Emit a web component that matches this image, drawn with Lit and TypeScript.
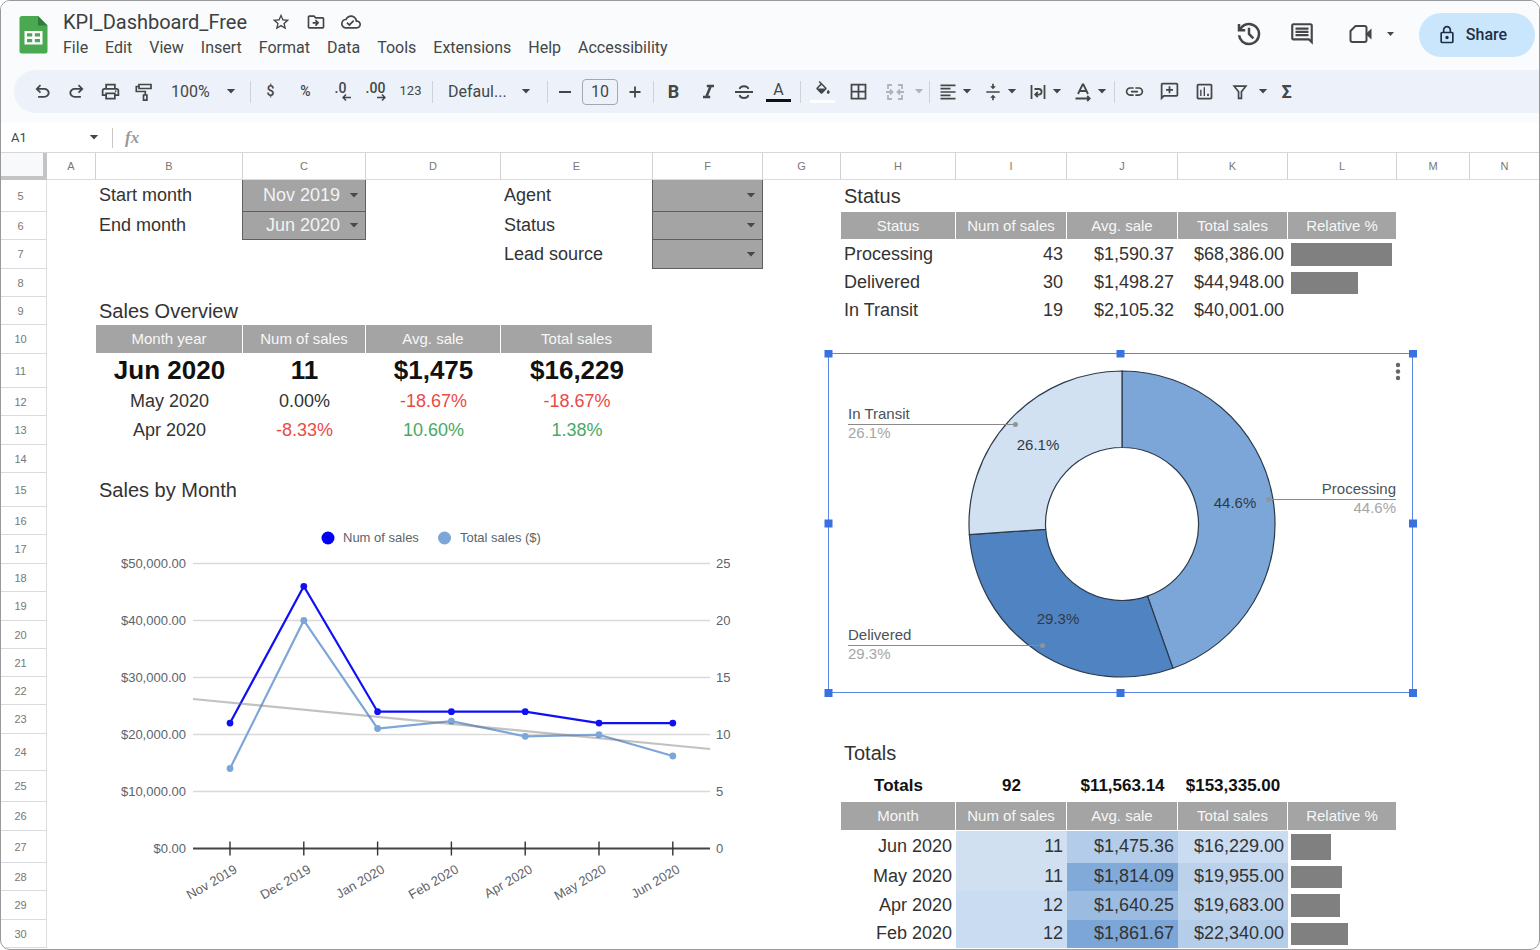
import { LitElement, html, svg, css, nothing, TemplateResult } from "lit";
import { customElement } from "lit/decorators.js";
import { classMap } from "lit/directives/class-map.js";

/* ---------- icons ---------- */

const glyph = (d: string, size = 20) => html`
  <svg width=${size} height=${size} viewBox="0 0 24 24" fill="currentColor" aria-hidden="true"><path d=${d}></path></svg>`;

const symbol = (d: string, size = 20) => html`
  <svg width=${size} height=${size} viewBox="0 -960 960 960" fill="currentColor" aria-hidden="true"><path d=${d}></path></svg>`;

const line = (d: string, width = 20, stroke = 2) => html`
  <svg width=${width} height=${width} viewBox="0 0 20 20" fill="none" stroke="currentColor" stroke-width=${stroke} aria-hidden="true"><path d=${d}></path></svg>`;

const caret = () => html`
  <svg class="caret" width="10" height="5" viewBox="0 0 10 5" fill="currentColor" aria-hidden="true"><path d="M0.800 0h8.400L5 4.600z"></path></svg>`;

const ICON = {
  undo: "M280-200v-80h284q63 0 109.500-40T720-420q0-60-46.500-100T564-560H312l104 104-56 56-200-200 200-200 56 56-104 104h252q97 0 169.500 63T806-420q0 94-72.500 157T564-200H280Z",
  redo: "M396-200q-97 0-169.500-63T154-420q0-94 72.500-157T396-640h252L544-744l56-56 200 200-200 200-56-56 104-104H396q-63 0-109.500 40T240-420q0 60 46.500 100T396-280h284v80H396Z",
  print: "M640-640v-120H320v120h-80v-200h480v200h-80Zm80 180q17 0 28.500-11.500T760-500q0-17-11.500-28.500T720-540q-17 0-28.500 11.500T680-500q0 17 11.500 28.500T720-460Zm-80 260v-160H320v160h320Zm80 80H240v-160H80v-240q0-51 35-85.500t85-34.500h560q51 0 85.500 34.500T880-520v240H720v160Zm80-240v-160q0-17-11.500-28.500T760-560H200q-17 0-28.500 11.500T160-520v160h80v-80h480v80h80Z",
  history: "M480-120q-138 0-240.500-91.500T122-440h82q14 104 92.500 172T480-200q117 0 198.500-81.500T760-480q0-117-81.500-198.500T480-760q-69 0-129 32t-101 88h110v80H120v-240h80v94q51-64 124.500-99T480-840q75 0 140.500 28.500t114 77q48.500 48.500 77 114T840-480q0 75-28.500 140.500t-77 114q-48.500 48.500-114 77T480-120Zm112-192L440-464v-216h80v184l128 128-56 56Z",
  lock: "M240-80q-33 0-56.500-23.500T160-160v-400q0-33 23.500-56.500T240-640h40v-80q0-83 58.500-141.500T480-920q83 0 141.500 58.500T680-720v80h40q33 0 56.500 23.500T800-560v400q0 33-23.500 56.500T720-80H240Zm0-80h480v-400H240v400Zm240-120q33 0 56.500-23.500T560-360q0-33-23.500-56.500T480-440q-33 0-56.500 23.500T400-360q0 33 23.500 56.500T480-280ZM360-640h240v-80q0-50-35-85t-85-35q-50 0-85 35t-35 85v80Z",
  star: "M22 9.240l-7.190-.62L12 2 9.190 8.630 2 9.240l5.460 4.730L5.820 21 12 17.270 18.180 21l-1.630-7.030L22 9.240zM12 15.400l-3.760 2.270 1-4.280-3.320-2.880 4.380-.38L12 6.100l1.710 4.040 4.380.38-3.320 2.880 1 4.280L12 15.400z",
  move: "M20 6h-8l-2-2H4c-1.100 0-2 .9-2 2v12c0 1.100.9 2 2 2h16c1.100 0 2-.9 2-2V8c0-1.100-.9-2-2-2zm0 12H4V6h5.170l2 2H20v10zm-7.840-6H8v2h4.160l-1.590 1.590L11.990 17 16 13.010 11.990 9l-1.410 1.410L12.160 12z",
  cloud: "M19.350 10.040C18.670 6.590 15.640 4 12 4 9.110 4 6.600 5.640 5.350 8.040 2.340 8.360 0 10.910 0 14c0 3.310 2.690 6 6 6h13c2.760 0 5-2.240 5-5 0-2.640-2.050-4.780-4.650-4.960zM19 18H6c-2.210 0-4-1.790-4-4 0-2.050 1.530-3.760 3.560-3.970l1.070-.11.5-.95C8.080 7.140 9.940 6 12 6c2.620 0 4.880 1.860 5.390 4.430l.3 1.500 1.530.11c1.560.1 2.780 1.410 2.780 2.960 0 1.650-1.350 3-3 3zm-9-3.820l-2.090-2.090L6.500 13.500 10 17l6.010-6.010-1.410-1.410z",
  comments: "M21.990 4c0-1.100-.89-2-1.990-2H4c-1.100 0-2 .9-2 2v12c0 1.100.9 2 2 2h14l4 4-.01-18zM20 4v13.170L18.830 16H4V4h16zM6 12h12v2H6zm0-3h12v2H6zm0-3h12v2H6z",
  fill: "M16.560 8.940L7.620 0 6.210 1.410l2.380 2.380-5.150 5.150c-.59.59-.59 1.540 0 2.120l5.500 5.500c.29.29.68.44 1.060.44s.77-.15 1.060-.44l5.500-5.500c.59-.58.59-1.530 0-2.120zM5.210 10L10 5.210 14.790 10H5.210zM19 11.500s-2 2.170-2 3.500c0 1.100.9 2 2 2s2-.9 2-2c0-1.330-2-3.500-2-3.500z",
  borders: "M3 3v18h18V3H3zm8 16H5v-6h6v6zm0-8H5V5h6v6zm8 8h-6v-6h6v6zm0-8h-6V5h6v6z",
  alignLeft: "M15 15H3v2h12v-2zm0-8H3v2h12V7zM3 13h18v-2H3v2zm0 8h18v-2H3v2zM3 3v2h18V3H3z",
  valign: "M9 19h2v3h2v-3h2.500L12 15.200 8.500 19zM15.500 5H13V2h-2v3H8.500L12 8.800 15.500 5zM4 11v2h16v-2H4z",
  link: "M3.900 12c0-1.710 1.390-3.100 3.100-3.100h4V7H7c-2.760 0-5 2.240-5 5s2.240 5 5 5h4v-1.900H7c-1.710 0-3.100-1.390-3.100-3.100zM8 13h8v-2H8v2zm9-6h-4v1.900h4c1.710 0 3.100 1.390 3.100 3.100s-1.390 3.100-3.100 3.100h-4V17h4c2.760 0 5-2.240 5-5s-2.240-5-5-5z",
  addComment: "M20 2H4c-1.100 0-2 .9-2 2v18l4-4h14c1.100 0 2-.9 2-2V4c0-1.100-.9-2-2-2zm0 14H5.170L4 17.170V4h16v12zM11 14h2v-3h3V9h-3V6h-2v3H8v2h3z",
  chart: "M19 3H5c-1.100 0-2 .9-2 2v14c0 1.100.9 2 2 2h14c1.100 0 2-.9 2-2V5c0-1.100-.9-2-2-2zm0 16H5V5h14v14zM7 10h1.600v7H7zm4-3h1.600v10H11zm4 7.500h2V17h-2z",
};

const roller = line("M5 2.500h12v4H5zM5 4.500H2.300v5h9V13M9.500 13h3.400v5.200H9.500z", 20, 1.7);
const strike = line("M1 10h18M14.300 7C14 5 12 4.200 10 4.200S6 5 5.700 7M5.700 13c.3 2 2.300 3 4.300 3s4-1 4.300-3", 20, 1.9);
const italic = line("M8 3.500h8.500M3.500 16.500H12M12.600 3.500 7.400 16.500", 17, 3);
const merge = line("M7 3H3v4M3 13v4h4M13 3h4v4M17 13v4h-4M1 10h6M13 10h6M5 7.500 7.500 10 5 12.500M15 7.500 12.500 10l2.500 2.500", 20, 1.8);
const wrap = line("M3.500 3v14M16.500 3v14M6.500 7h4.300a2.800 2.800 0 0 1 0 5.600H7.500M9.800 10 7.200 12.600l2.600 2.600", 20, 1.8);
const rotate = line("M5 12 9.600 2.500h.8L15 12M6.500 9h7M2.500 16.500h14M14.200 14l2.500 2.500-2.500 2.500", 20, 1.8);
const funnel = line("M3.500 3.500h13L11.600 9.800v7.200H8.400V9.800z", 18, 1.9);
const meet = html`<svg width="24" height="20" viewBox="0 0 24 20" fill="none" stroke="currentColor" stroke-width="2" aria-hidden="true">
  <path d="M6.500 2h9a2 2 0 0 1 2 2v12a2 2 0 0 1-2 2h-12a2 2 0 0 1-2-2V7z"></path><path d="M16.500 10l6-5.500v11z" fill="currentColor" stroke="none"></path></svg>`;

/* ---------- sheet data ---------- */

type Kind = "text" | "title" | "head" | "big" | "mid" | "num" | "strong" | "bar" | "pick";
interface Cell { v: string; k: Kind; tone?: string; label?: string; ratio?: number; fill?: string; }
interface Row { n: number; h: number; cells?: Record<string, Cell>; }

const COLS: [string, number][] = [
  ["A", 49], ["B", 147], ["C", 123], ["D", 135], ["E", 152], ["F", 110], ["G", 78],
  ["H", 115], ["I", 111], ["J", 111], ["K", 110], ["L", 109], ["M", 73], ["N", 0],
];

const c = (v: string, k: Kind, more: Partial<Cell> = {}): Cell => ({ v, k, ...more });
const heads = (start: string, names: string[]) =>
  Object.fromEntries(names.map((n, i) => [String.fromCharCode(start.charCodeAt(0) + i), c(n, "head")]));
const status = (name: string, n: string, avg: string, total: string, ratio: number) => ({
  H: c(name, "text"), I: c(n, "num"), J: c(avg, "num"), K: c(total, "num"), L: c("", "bar", { ratio }),
});
const month = (name: string, n: string, avg: string, total: string, ratio: number, fills: string[]) => ({
  H: c(name, "num"), I: c(n, "num", { fill: fills[0] }), J: c(avg, "num", { fill: fills[1] }),
  K: c(total, "num", { fill: fills[2] }), L: c("", "bar", { ratio }),
});

const ROWS: Row[] = [
  { n: 5, h: 32, cells: { B: c("Start month", "text"), C: c("Nov 2019", "pick", { label: "Start month" }), E: c("Agent", "text"), F: c("", "pick", { label: "Agent" }), H: c("Status", "title") } },
  { n: 6, h: 28, cells: { B: c("End month", "text"), C: c("Jun 2020", "pick", { label: "End month" }), E: c("Status", "text"), F: c("", "pick", { label: "Status" }), ...heads("H", ["Status", "Num of sales", "Avg. sale", "Total sales", "Relative %"]) } },
  { n: 7, h: 29, cells: { E: c("Lead source", "text"), F: c("", "pick", { label: "Lead source" }), ...status("Processing", "43", "$1,590.37", "$68,386.00", 100) } },
  { n: 8, h: 28, cells: status("Delivered", "30", "$1,498.27", "$44,948.00", 66) },
  { n: 9, h: 28, cells: { B: c("Sales Overview", "title"), ...status("In Transit", "19", "$2,105.32", "$40,001.00", 0) } },
  { n: 10, h: 29, cells: heads("B", ["Month year", "Num of sales", "Avg. sale", "Total sales"]) },
  { n: 11, h: 34, cells: { B: c("Jun 2020", "big"), C: c("11", "big"), D: c("$1,475", "big"), E: c("$16,229", "big") } },
  { n: 12, h: 28, cells: { B: c("May 2020", "mid"), C: c("0.00%", "mid"), D: c("-18.67%", "mid", { tone: "down" }), E: c("-18.67%", "mid", { tone: "down" }) } },
  { n: 13, h: 29, cells: { B: c("Apr 2020", "mid"), C: c("-8.33%", "mid", { tone: "down" }), D: c("10.60%", "mid", { tone: "up" }), E: c("1.38%", "mid", { tone: "up" }) } },
  { n: 14, h: 28 },
  { n: 15, h: 34, cells: { B: c("Sales by Month", "title") } },
  { n: 16, h: 28 }, { n: 17, h: 29 }, { n: 18, h: 28 }, { n: 19, h: 29 }, { n: 20, h: 28 },
  { n: 21, h: 28 }, { n: 22, h: 28 }, { n: 23, h: 29 },
  { n: 24, h: 37, cells: { H: c("Totals", "title") } },
  { n: 25, h: 31, cells: { H: c("Totals", "strong"), I: c("92", "strong"), J: c("$11,563.14", "strong"), K: c("$153,335.00", "strong") } },
  { n: 26, h: 29, cells: heads("H", ["Month", "Num of sales", "Avg. sale", "Total sales", "Relative %"]) },
  { n: 27, h: 32, cells: month("Jun 2020", "11", "$1,475.36", "$16,229.00", 40, ["#d0e0f1", "#b2cce9", "#c9dcf1"]) },
  { n: 28, h: 28, cells: month("May 2020", "11", "$1,814.09", "$19,955.00", 50, ["#d0e0f1", "#82aad9", "#bcd2eb"]) },
  { n: 29, h: 29, cells: month("Apr 2020", "12", "$1,640.25", "$19,683.00", 49, ["#c9dcf1", "#9bbbe1", "#bdd3eb"]) },
  { n: 30, h: 28, cells: month("Feb 2020", "12", "$1,861.67", "$22,340.00", 56, ["#c9dcf1", "#7ca6d7", "#b4cee9"]) },
];

/* ---------- line chart ---------- */

@customElement("sales-line-chart")
class SalesLineChart extends LitElement {
  static styles = css`
    :host { display: block; }
    svg { display: block; font: 13px "Liberation Sans", Arial, sans-serif; fill: #5b646b; }
  `;
  private months = ["Nov 2019", "Dec 2019", "Jan 2020", "Feb 2020", "Apr 2020", "May 2020", "Jun 2020"];
  private counts = [11, 23, 12, 12, 12, 11, 11];
  private totals = [14035, 40001, 21050, 22340, 19683, 19955, 16229];

  render() {
    const x = (i: number) => 134 + i * 73.8;
    const y = (v: number) => 333.5 - v * 11.4;
    const series = (vals: number[], color: string) => svg`
      <polyline points=${vals.map((v, i) => `${x(i)},${y(v)}`).join(" ")} fill="none" stroke=${color} stroke-width="2.200"></polyline>
      ${vals.map((v, i) => svg`<circle cx=${x(i)} cy=${y(v)} r="3.400" fill=${color}></circle>`)}`;
    return html`
      <svg width="660" height="400" viewBox="0 0 660 400" role="img" aria-label="Sales by Month">
        <circle cx="232" cy="23" r="6.500" fill="#0000f5"></circle>
        <text x="247" y="27">Num of sales</text>
        <circle cx="348.500" cy="23" r="6.500" fill="#7ca6d8"></circle>
        <text x="364" y="27">Total sales ($)</text>
        ${[5, 10, 15, 20, 25].map((v) => svg`<path d="M97 ${y(v)}H614" stroke="#d9d9d9" stroke-width="1.500"></path>`)}
        ${[0, 5, 10, 15, 20, 25].map((v) => svg`
          <text x="90" y=${y(v) + 4.5} text-anchor="end">${v ? `$${v * 2},000.00` : "$0.00"}</text>
          <text x="620" y=${y(v) + 4.5}>${v}</text>`)}
        <path d="M97 333.500H614" stroke="#444" stroke-width="1.800"></path>
        ${this.months.map((m, i) => svg`
          <path d="M${x(i)} 326.500v14" stroke="#333" stroke-width="1.400"></path>
          <text transform="translate(${x(i) + 8} 357) rotate(-30)" text-anchor="end">${m}</text>`)}
        ${series(this.counts, "#1010f5")}
        ${series(this.totals.map((t) => t / 2000), "#7ca6d8")}
        <path d="M97 184L614 234" stroke="#777" stroke-opacity="0.450" stroke-width="2.200"></path>
      </svg>`;
  }
}

/* ---------- donut chart ---------- */

@customElement("status-donut-chart")
class StatusDonutChart extends LitElement {
  static styles = css`
    :host { display: block; }
    svg { display: block; font: 15px "Liberation Sans", Arial, sans-serif; fill: #4a5359; }
    .share { fill: #a6a6a6; }
    .inner { fill: #2f3a44; }
    .leader { stroke: #8a8a8a; fill: none; }
    .dot { fill: #8f9499; }
    .frame { fill: none; stroke: #5b86e5; }
    .handle { fill: #3871e0; }
    .menu { fill: #666; }
  `;
  private slices = [
    { share: 0.446, color: "#7ca6d8" },
    { share: 0.293, color: "#4f83c2" },
    { share: 0.261, color: "#d1e1f1" },
  ];

  private ring() {
    const cx = 298, cy = 174, R = 153, r = 76.5;
    let at = 0;
    const p = (t: number, rad: number) =>
      `${(cx + rad * Math.sin(t * 2 * Math.PI)).toFixed(2)} ${(cy - rad * Math.cos(t * 2 * Math.PI)).toFixed(2)}`;
    return this.slices.map((s) => {
      const a = at, b = (at += s.share);
      return svg`<path fill=${s.color} stroke="#2b3b4b" stroke-width="1.200"
        d="M${p(a, R)}A${R} ${R} 0 0 1 ${p(b, R)}L${p(b, r)}A${r} ${r} 0 0 0 ${p(a, r)}Z"></path>`;
    });
  }

  render() {
    const xs = [4.5, 296.5, 589], ys = [3.5, 173.5, 343];
    return html`
      <svg width="593" height="348" viewBox="0 0 593 348" role="img" aria-label="Total sales by status">
        <rect x="4.500" y="3.500" width="584" height="339" fill="#fff"></rect>
        ${this.ring()}
        <text class="inner" x="214" y="100" text-anchor="middle">26.1%</text>
        <text class="inner" x="411" y="158" text-anchor="middle">44.6%</text>
        <text class="inner" x="234" y="274" text-anchor="middle">29.3%</text>
        <path class="leader" d="M24 74.500H191M24 295.500H219M444 149.500H572"></path>
        <circle class="dot" cx="191.500" cy="74.500" r="2.500"></circle>
        <circle class="dot" cx="218.500" cy="295.500" r="2.500"></circle>
        <circle class="dot" cx="444.500" cy="149.500" r="2.500"></circle>
        <text x="24" y="69">In Transit</text><text class="share" x="24" y="88">26.1%</text>
        <text x="24" y="290">Delivered</text><text class="share" x="24" y="309">29.3%</text>
        <text x="572" y="144" text-anchor="end">Processing</text><text class="share" x="572" y="163" text-anchor="end">44.6%</text>
        <rect class="frame" x="4.500" y="3.500" width="584" height="339"></rect>
        ${ys.map((y) => xs.map((x) => (y === ys[1] && x === xs[1] ? nothing
          : svg`<rect class="handle" x=${x - 4} y=${y - 4} width="8" height="8"></rect>`)))}
        ${[15, 21.500, 28].map((y) => svg`<circle class="menu" cx="574" cy=${y} r="2.200"></circle>`)}
      </svg>`;
  }
}

/* ---------- application ---------- */

@customElement("app-root")
class AppRoot extends LitElement {
  static styles = css`
    :host { display: block; background: #fff; color: #444746; font-family: Roboto, "Open Sans", sans-serif; }
    * { box-sizing: border-box; }
    svg { display: block; flex: none; }
    button, input, select { font: inherit; color: inherit; background: none; border: 0; margin: 0; padding: 0; outline: none; }
    button { display: flex; align-items: center; justify-content: center; cursor: pointer; }
    select { appearance: none; cursor: pointer; }
    .window { display: flex; flex-direction: column; height: 100vh; overflow: hidden; border: 1px solid #999; border-radius: 10px; background: #fff; }
    .top { background: #f9fbfd; padding-bottom: 10px; }

    header { display: flex; align-items: flex-start; height: 69px; padding: 10px 4px 0 18px; }
    .logo { margin: 5px 15px 0 0; }
    .names { flex: 1; }
    .title-row { display: flex; align-items: center; gap: 15px; height: 22px; }
    h1 { margin: 0 9px 0 0; font-size: 20px; line-height: 20px; font-weight: 400; color: #3c4043; }
    .menus { display: flex; gap: 17px; margin-top: 3px; }
    .menus button { font-size: 16px; line-height: 24px; color: #444746; }
    .actions { display: flex; align-items: center; height: 46px; }
    .actions .tool { width: 53px; }
    .actions .call { width: 60px; gap: 14px; margin: 0 18px 0 13px; }
    .share { width: 116px; height: 44px; margin-top: 1px; padding-right: 10px; border-radius: 22px; background: #c9e6fd; color: #1f2f46; font-size: 16px; font-weight: 500; gap: 9px; }

    .toolbar { display: flex; height: 43px; margin-left: 13px; background: #edf2fa; border-radius: 22px 0 0 22px; font-size: 16px; }
    .group { display: flex; align-items: center; position: relative; padding: 0 5px 0 2px; }
    .group:not(:last-child)::after { content: ""; width: 1px; height: 22px; background: #cdd1d8; position: absolute; right: 0; }
    .group.first { padding: 0 10px 0 11px; }
    .group.flush { padding: 0 1px 0 0; }
    .group.size { padding: 0 2px 0 0; }
    .group.drops { padding: 0 5px 0 0; }
    .group.paint { padding: 0 5px 0 4px; gap: 1px; }
    .tool { width: 35px; height: 32px; }
    .first .tool, .size .tool { width: 34px; }
    .drop { width: 45px; height: 32px; gap: 4px; padding-left: 8px; justify-content: flex-start; }
    .narrow { width: 12px; height: 32px; }
    .faded { color: #b0b4b9; }
    .select { display: grid; align-items: center; }
    .select > * { grid-area: 1 / 1; }
    .select .caret { justify-self: end; margin-right: 5px; pointer-events: none; }
    .zoom select { width: 80px; padding-left: 10px; }
    .font select { width: 114px; padding-left: 15px; }
    .font .caret { margin-right: 16px; }
    .size input { width: 36px; height: 26px; border: 1px solid #a4a7ab; border-radius: 4px; text-align: center; }
    .small { font-size: 14px; font-weight: 500; padding-bottom: 2px; }
    .tiny { font-size: 13px; padding-bottom: 2px; }
    .strong { font-size: 18px; font-weight: 700; }
    .decimal { flex-direction: column; font-size: 14px; line-height: 12px; font-weight: 500; }
    .decimal svg { margin-left: 12px; }
    .swatch { flex-direction: column; line-height: 16px; gap: 1px; }
    .swatch i { width: 25px; height: 3px; background: #111; }
    .swatch i.white { background: #fff; }

    .formula { display: flex; align-items: center; height: 29px; font-size: 14px; }
    .name-box { display: flex; align-items: center; width: 112px; padding: 0 13px 0 10px; border-right: 1px solid #c7c7c7; height: 20px; }
    .name-box input { flex: 1; min-width: 0; font-size: 13px; }
    .fx { padding-left: 12px; font: italic 700 17px "Liberation Serif", serif; color: #9a9a9a; }
    .formula > input { flex: 1; }

    .sheet { position: relative; flex: 1; min-height: 0; overflow: hidden; font-family: "Liberation Sans", Arial, sans-serif; }
    table { table-layout: fixed; width: 100%; border-collapse: separate; border-spacing: 0; border-top: 1px solid #d5d7da; }
    th, td { padding: 0; white-space: nowrap; line-height: 20px; overflow: hidden; }
    .rownum { width: 46px; }
    thead th { height: 27px; font-size: 11px; font-weight: 400; color: #777; border-right: 1px solid #d0d2d5; border-bottom: 1px solid #d9dbde; }
    thead th:last-child { border-right: 0; }
    thead th.corner { background: #f8f9fb; border-right: 4px solid #c4c4c4; border-bottom: 4px solid #c4c4c4; }
    tbody th { font-size: 11px; font-weight: 400; color: #777; border-right: 1px solid #dcdee1; border-bottom: 1px solid #d9dbde; padding-right: 6px; }
    td { color: #333; font-size: 18px; padding: 0 3px 2px; }
    td.text, td.title { text-align: left; overflow: visible; }
    td.title { font-size: 20px; padding-bottom: 0; }
    td.head { padding: 0; background: #a4a4a4; background-clip: padding-box; border-right: 1px solid #fff; border-bottom: 1px solid #fff; color: #f7f7f7; font-size: 15px; text-align: center; }
    td.big { font-size: 26px; font-weight: 700; text-align: center; color: #111; }
    td.mid { text-align: center; }
    td.num { text-align: right; padding-right: 4px; }
    td.strong { font-size: 17px; text-align: center; color: #111; }
    td.down { color: #ea4a45; }
    td.up { color: #4aa862; }
    td.bars { padding: 0 5px 0 3px; }
    td.pick { padding: 0; background: #a4a4a4; border: 1px solid #5f5f5f; border-width: 0 1px 1px 0; box-shadow: -1px 0 #5f5f5f; overflow: visible; }
    td.pick select { width: 100%; height: 26px; padding: 0 25px 2px 0; color: #f3f3f3; text-align-last: right; }
    td.pick .caret { margin-right: 6px; color: #484848; }
    .bar { background: #808080; }
    .trend { position: absolute; left: 95px; top: 363px; }
    .donut { position: absolute; left: 823px; top: 198px; }
  `;

  private tool(name: string, body: unknown, cls = "") {
    return html`<button class="tool ${cls}" aria-label=${name}>${body}</button>`;
  }

  private drop(name: string, body: unknown) {
    return html`<button class="drop" aria-label=${name}>${body}${caret()}</button>`;
  }

  private cell(row: Row, col: string): TemplateResult {
    const cell = row.cells?.[col];
    if (!cell) return html`<td></td>`;
    const cls = classMap({ [cell.k]: true, [cell.tone ?? "plain"]: true });
    if (cell.k === "bar") {
      return html`<td class="bars"><div class="bar" style="width:${cell.ratio}%;height:${row.h - 6}px"></div></td>`;
    }
    if (cell.k === "pick") {
      return html`<td class=${cls}><div class="select">
        <select aria-label=${cell.label ?? ""}><option>${cell.v}</option></select>${caret()}</div></td>`;
    }
    return html`<td class=${cls} style=${cell.fill ? `background:${cell.fill}` : nothing}>${cell.v}</td>`;
  }

  render() {
    const menus = ["File", "Edit", "View", "Insert", "Format", "Data", "Tools", "Extensions", "Help", "Accessibility"];
    return html`
      <div class="window">
        <div class="top">
          <header>
            <svg class="logo" width="29" height="38" viewBox="0 0 29 38" aria-hidden="true">
              <path d="M3 0h16l9.500 9.500V35a2.500 2.500 0 0 1-2.500 2.500H3A2.500 2.500 0 0 1 .5 35V2.500A2.500 2.500 0 0 1 3 0z" fill="#4aa851"></path>
              <path d="M19 0l9.500 9.500H19z" fill="#2f7d38"></path>
              <path d="M5.500 15h18v13.500h-18zM8 17.300v3.200h5.200v-3.200zM15.800 17.300v3.200H21v-3.200zM8 23v3.200h5.200V23zM15.800 23v3.200H21V23z" fill="#fff" fill-rule="evenodd"></path>
            </svg>
            <div class="names">
              <div class="title-row">
                <h1>KPI_Dashboard_Free</h1>
                <button aria-label="Star">${glyph(ICON.star)}</button>
                <button aria-label="Move">${glyph(ICON.move)}</button>
                <button aria-label="Document status">${glyph(ICON.cloud)}</button>
              </div>
              <nav class="menus">${menus.map((m) => html`<button>${m}</button>`)}</nav>
            </div>
            <div class="actions">
              ${this.tool("Version history", symbol(ICON.history, 30))}
              ${this.tool("Comments", glyph(ICON.comments, 26))}
              <button class="call" aria-label="Join a call">${meet}${html`<svg width="7" height="4" viewBox="0 0 7 4" fill="currentColor" aria-hidden="true"><path d="M0 0h7L3.500 4z"></path></svg>`}</button>
              <button class="share">${symbol(ICON.lock, 20)}Share</button>
            </div>
          </header>
          <div class="toolbar" role="toolbar">
            <div class="group first">
              ${this.tool("Undo", symbol(ICON.undo, 21))}
              ${this.tool("Redo", symbol(ICON.redo, 21))}
              ${this.tool("Print", symbol(ICON.print, 21))}
              ${this.tool("Paint format", roller)}
              <div class="select zoom"><select aria-label="Zoom"><option>100%</option></select>${caret()}</div>
            </div>
            <div class="group">
              ${this.tool("Currency", "$", "small")}
              ${this.tool("Percent", "%", "small")}
              ${this.tool("Decrease decimals", html`.0<svg width="9" height="7" viewBox="0 0 9 7" fill="none" stroke="currentColor" stroke-width="1.500"><path d="M9 3.500H1M4 .5l-3 3 3 3"></path></svg>`, "decimal")}
              ${this.tool("Increase decimals", html`.00<svg width="9" height="7" viewBox="0 0 9 7" fill="none" stroke="currentColor" stroke-width="1.500"><path d="M0 3.500h8M5 .5l3 3-3 3"></path></svg>`, "decimal")}
              ${this.tool("More formats", "123", "tiny")}
            </div>
            <div class="group flush">
              <div class="select font"><select aria-label="Font"><option>Defaul...</option></select>${caret()}</div>
            </div>
            <div class="group size">
              ${this.tool("Decrease font size", line("M4 10h12", 20, 1.8))}
              <input aria-label="Font size" value="10" />
              ${this.tool("Increase font size", line("M4.500 10h11M10 4.500v11", 20, 1.8))}
            </div>
            <div class="group">
              ${this.tool("Bold", "B", "strong")}
              ${this.tool("Italic", italic)}
              ${this.tool("Strikethrough", strike)}
              ${this.tool("Text color", html`A<i></i>`, "swatch")}
            </div>
            <div class="group paint">
              ${this.tool("Fill color", html`${glyph(ICON.fill, 18)}<i class="white"></i>`, "swatch")}
              ${this.tool("Borders", glyph(ICON.borders, 21))}
              ${this.tool("Merge cells", merge, "faded")}
              <button class="narrow faded" aria-label="Merge type">${caret()}</button>
            </div>
            <div class="group drops">
              ${this.drop("Horizontal align", glyph(ICON.alignLeft, 20))}
              ${this.drop("Vertical align", glyph(ICON.valign, 20))}
              ${this.drop("Text wrapping", wrap)}
              ${this.drop("Text rotation", rotate)}
            </div>
            <div class="group">
              ${this.tool("Insert link", glyph(ICON.link, 21))}
              ${this.tool("Insert comment", glyph(ICON.addComment, 21))}
              ${this.tool("Insert chart", glyph(ICON.chart, 21))}
              ${this.tool("Create filter", funnel)}
              <button class="narrow" aria-label="Filter views">${caret()}</button>
              ${this.tool("Functions", "Σ", "strong")}
            </div>
          </div>
        </div>

        <div class="formula">
          <div class="name-box"><input aria-label="Name box" value="A1" />${caret()}</div>
          <span class="fx">fx</span>
          <input aria-label="Formula" />
        </div>

        <div class="sheet">
          <table>
            <colgroup>
              <col class="rownum" />
              ${COLS.map(([, w]) => html`<col style=${w ? `width:${w}px` : nothing} />`)}
            </colgroup>
            <thead><tr><th class="corner"></th>${COLS.map(([name]) => html`<th scope="col">${name}</th>`)}</tr></thead>
            <tbody>
              ${ROWS.map((row) => html`<tr style="height:${row.h}px"><th scope="row">${row.n}</th>${COLS.map(([name]) => this.cell(row, name))}</tr>`)}
            </tbody>
          </table>
          <sales-line-chart class="trend"></sales-line-chart>
          <status-donut-chart class="donut"></status-donut-chart>
        </div>
      </div>`;
  }
}
